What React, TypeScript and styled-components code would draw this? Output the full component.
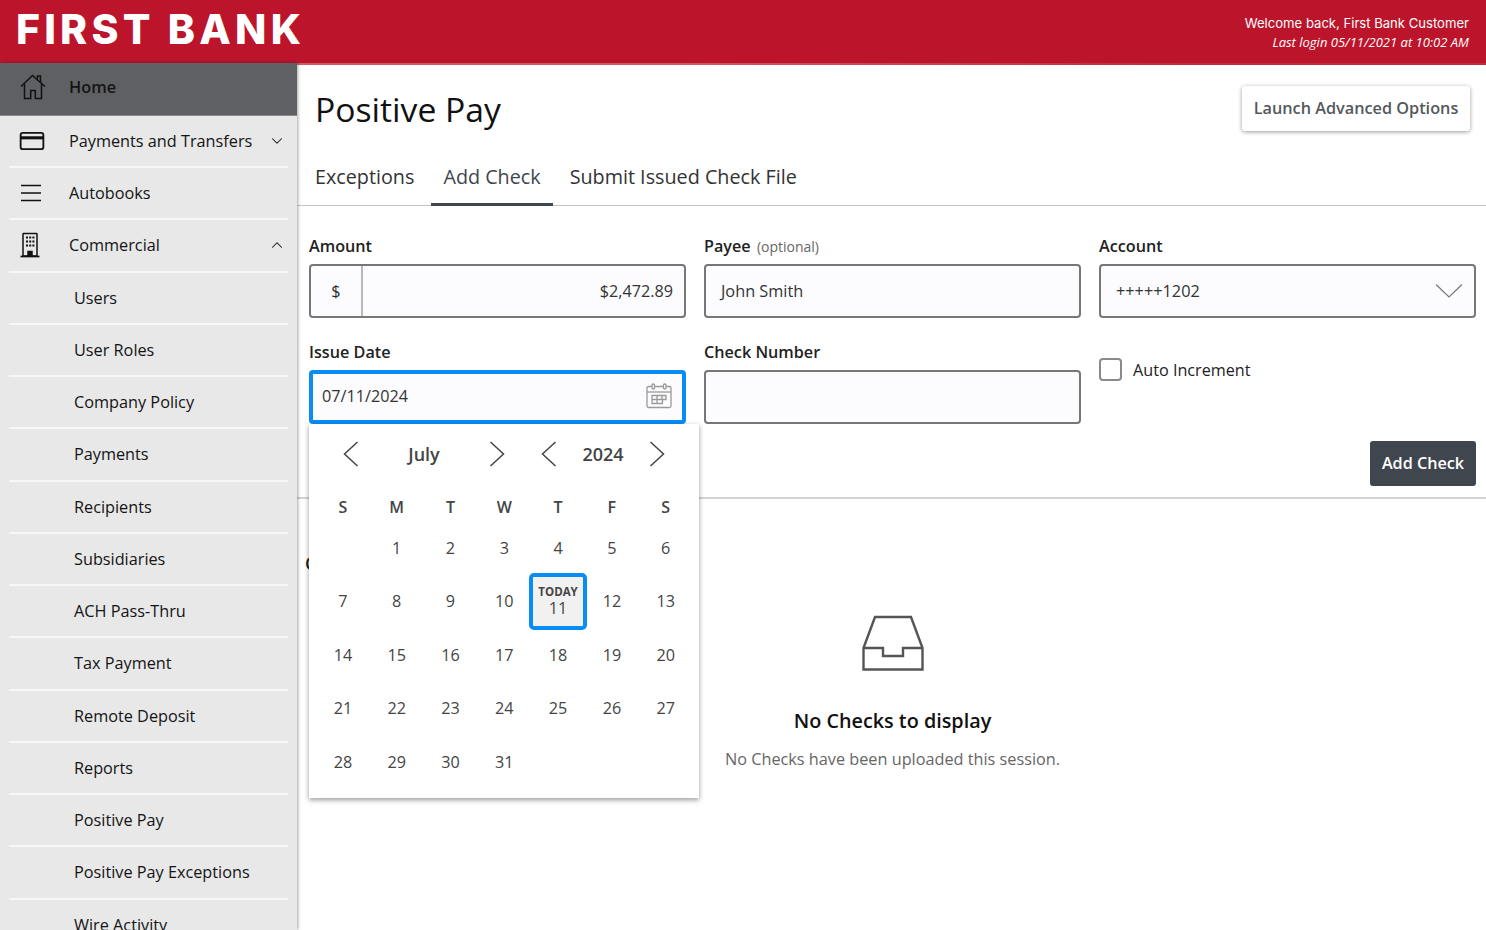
import React from 'react'
import styled, { createGlobalStyle } from 'styled-components'
import { ChevronDown, ChevronUp } from 'lucide-react'

const GlobalStyle = createGlobalStyle`
	html, body {
		margin: 0;
		padding: 0;
		height: 930px;
		overflow: hidden;
		background: #fff;
		font-family: "Open Sans", "Liberation Sans", sans-serif;
		color: #2b2b2b;
	}
	* { box-sizing: border-box; }
`

const HomeIcon = () => (
	<svg width="28" height="28" viewBox="0 0 28 28" fill="none" stroke="#111" strokeWidth="1.5">
		<path d="M2 13.5 13.5 2.5 26 13.5" />
		<path d="M5.5 11v14.5h6.2v-8h4.6v8h6.2V11" />
		<path d="M18.5 6V3h3v6" />
	</svg>
)

const CardIcon = () => (
	<svg width="26" height="20" viewBox="0 0 28 22" fill="none" stroke="#111" strokeWidth="2">
		<rect x="1.5" y="2" width="25" height="18" rx="2.5" />
		<path d="M1.5 7.5h25" strokeWidth="3.4" />
	</svg>
)

const MenuIcon = () => (
	<svg width="24" height="20" viewBox="0 0 24 20" fill="none" stroke="#111" strokeWidth="1.7">
		<path d="M2 2.5h20M2 10h20M2 17.5h20" />
	</svg>
)

const BuildingIcon = () => (
	<svg width="22" height="26" viewBox="0 0 22 26" fill="none" stroke="#111" strokeWidth="1.5">
		<rect x="4" y="1.5" width="14" height="22.5" rx="0.5" />
		<path d="M1.5 24.5h19" strokeWidth="1.7" />
		<path d="M9 24v-4.5h4V24" fill="#111" />
		<path d="M7 5.5h2M10.2 5.5h2M13.4 5.5h2M7 9.5h2M10.2 9.5h2M13.4 9.5h2M7 13.5h2M10.2 13.5h2M13.4 13.5h2" strokeWidth="2.2" />
	</svg>
)

const CalendarIcon = () => (
	<svg width="26" height="26" viewBox="0 0 26 26" fill="none" stroke="#9a9a9a" strokeWidth="1.3">
		<rect x="1" y="3.5" width="24" height="21" rx="1.5" />
		<path d="M1 9h24" />
		<rect x="6" y="1" width="2.5" height="5" rx="1.2" fill="#fff" />
		<rect x="17.5" y="1" width="2.5" height="5" rx="1.2" fill="#fff" />
		<path d="M6 12.5h14v4h-3.5v4H6zM6 16.5h10.5M11 12.5v8M16 12.5v4" />
	</svg>
)

const InboxIcon = () => (
	<svg width="62" height="56" viewBox="0 0 62 56" fill="none" stroke="#555" strokeWidth="2.4">
		<path d="M1.5 54.5V33L13 2h36l11.500 31v21.500z" />
		<path d="M1.500 33H21v8h20v-8h19.500" />
	</svg>
)

const LeftArrow = () => (
	<svg width="16" height="26" viewBox="0 0 16 26" fill="none" stroke="#444" strokeWidth="1.500">
		<path d="M14.500 1 1.500 13l13 12" />
	</svg>
)

const RightArrow = () => (
	<svg width="16" height="26" viewBox="0 0 16 26" fill="none" stroke="#444" strokeWidth="1.500">
		<path d="M1.500 1l13 12-13 12" />
	</svg>
)

const sideItems: { label: string; icon?: React.ReactNode; chevron?: 'up' | 'down'; active?: boolean }[] = [
	{ label: 'Home', icon: <HomeIcon />, active: true },
	{ label: 'Payments and Transfers', icon: <CardIcon />, chevron: 'down' },
	{ label: 'Autobooks', icon: <MenuIcon /> },
	{ label: 'Commercial', icon: <BuildingIcon />, chevron: 'up' },
	{ label: 'Users' },
	{ label: 'User Roles' },
	{ label: 'Company Policy' },
	{ label: 'Payments' },
	{ label: 'Recipients' },
	{ label: 'Subsidiaries' },
	{ label: 'ACH Pass-Thru' },
	{ label: 'Tax Payment' },
	{ label: 'Remote Deposit' },
	{ label: 'Reports' },
	{ label: 'Positive Pay' },
	{ label: 'Positive Pay Exceptions' },
	{ label: 'Wire Activity' },
]

const weekDays = ['S', 'M', 'T', 'W', 'T', 'F', 'S']
const days: (number | null)[] = [null, ...Array.from({ length: 31 }, (_, i) => i + 1)]

export default function App() {
	return (
		<Page>
			<GlobalStyle />
			<Header>
				<Logo>FIRST BANK</Logo>
				<Welcome>
					<div>Welcome back, First Bank Customer</div>
					<LastLogin>Last login 05/11/2021 at 10:02 AM</LastLogin>
				</Welcome>
			</Header>
			<Body>
				<Sidebar>
					{sideItems.map((item) => (
						<SideRow key={item.label} $active={item.active}>
							{item.icon ? <SideIcon>{item.icon}</SideIcon> : null}
							<SideLabel $sub={!item.icon}>{item.label}</SideLabel>
							{item.chevron === 'down' && <ChevronDown size={18} strokeWidth={1.4} color="#111" />}
							{item.chevron === 'up' && <ChevronUp size={18} strokeWidth={1.4} color="#111" />}
						</SideRow>
					))}
				</Sidebar>
				<Main>
					<TitleRow>
						<Title>Positive Pay</Title>
						<LaunchButton>Launch Advanced Options</LaunchButton>
					</TitleRow>
					<Tabs>
						<Tab>Exceptions</Tab>
						<Tab $active>Add Check</Tab>
						<Tab>Submit Issued Check File</Tab>
					</Tabs>
					<FormArea>
						<FormGrid>
							<Field>
								<FieldLabel>Amount</FieldLabel>
								<InputBox>
									<Prefix>$</Prefix>
									<AmountValue>$2,472.89</AmountValue>
								</InputBox>
							</Field>
							<Field>
								<FieldLabel>
									Payee <Optional>(optional)</Optional>
								</FieldLabel>
								<InputBox>
									<TextValue>John Smith</TextValue>
								</InputBox>
							</Field>
							<Field>
								<FieldLabel>Account</FieldLabel>
								<InputBox>
									<TextValue>+++++1202</TextValue>
									<SelectArrow width="28" height="16" viewBox="0 0 28 16" fill="none" stroke="#777" strokeWidth="1.200">
										<path d="M1 1.500 14 14 27 1.500" />
									</SelectArrow>
								</InputBox>
							</Field>
							<Field>
								<FieldLabel>Issue Date</FieldLabel>
								<DateBox>
									<DateValue>07/11/2024</DateValue>
									<CalendarIcon />
								</DateBox>
								<Popover>
									<PickerHead>
										<PickerArrow><LeftArrow /></PickerArrow>
										<MonthName>July</MonthName>
										<PickerArrow><RightArrow /></PickerArrow>
										<PickerArrow $gap><LeftArrow /></PickerArrow>
										<YearName>2024</YearName>
										<PickerArrow><RightArrow /></PickerArrow>
									</PickerHead>
									<WeekRow>
										{weekDays.map((d, i) => (
											<WeekDay key={i}>{d}</WeekDay>
										))}
									</WeekRow>
									<DayGrid>
										{days.map((d, i) =>
											d === 11 ? (
												<TodayCell key={i}>
													<TodayTag>TODAY</TodayTag>
													<TodayNum>11</TodayNum>
												</TodayCell>
											) : (
												<DayCell key={i}>{d}</DayCell>
											)
										)}
									</DayGrid>
								</Popover>
							</Field>
							<Field>
								<FieldLabel>Check Number</FieldLabel>
								<InputBox />
							</Field>
							<AutoField>
								<Checkbox />
								<AutoLabel>Auto Increment</AutoLabel>
							</AutoField>
						</FormGrid>
						<ActionRow>
							<AddButton>Add Check</AddButton>
						</ActionRow>
					</FormArea>
					<ListSection>
						<ListHeading>Checks</ListHeading>
						<EmptyState>
							<InboxIcon />
							<EmptyTitle>No Checks to display</EmptyTitle>
							<EmptyText>No Checks have been uploaded this session.</EmptyText>
						</EmptyState>
					</ListSection>
				</Main>
			</Body>
		</Page>
	)
}

const Page = styled.div`
	width: 1486px;
	height: 930px;
	display: flex;
	flex-direction: column;
	overflow: hidden;
`

const Header = styled.header`
	height: 65px;
	flex: none;
	background: #bc152b;
	border-bottom: 2px solid;
	border-image: linear-gradient(90deg, #d2586a 0, #d2586a 45%, #c4283c 80%) 1;
	display: flex;
	align-items: flex-start;
	justify-content: space-between;
	padding: 0 17px 0 16px;
`

const Logo = styled.div`
	font-family: Inter, "Open Sans", sans-serif;
	font-weight: 800;
	font-size: 41px;
	line-height: 58px;
	letter-spacing: 4.200px;
	color: #fff;
	white-space: nowrap;
`

const Welcome = styled.div`
	padding-top: 13px;
	text-align: right;
	color: #fff;
	font-family: Inter, "Open Sans", sans-serif;
	font-size: 13.100px;
	line-height: 20px;
`

const LastLogin = styled.div`
	font-family: "Open Sans", sans-serif;
	font-style: italic;
	font-size: 13px;
	line-height: 19px;
`

const Body = styled.div`
	flex: 1;
	display: flex;
	min-height: 0;
`

const Sidebar = styled.nav`
	width: 297px;
	flex: none;
	margin-top: -2px;
	background: #e8e8e8;
	box-shadow: 1px 0 3px rgba(0, 0, 0, 0.35);
	overflow: hidden;
	z-index: 1;
`

const SideRow = styled.div<{ $active?: boolean }>`
	height: ${(p) => (p.$active ? '52.750px' : '52.250px')};
	display: flex;
	align-items: center;
	margin: ${(p) => (p.$active ? '0' : '0 9px')};
	padding: ${(p) => (p.$active ? '0 18px 3px 19px' : '0 2px 0 10px')};
	background: ${(p) => (p.$active ? '#5f6064' : 'transparent')};
	border-bottom: ${(p) => (p.$active ? '1px solid #8a8a8a' : '2px solid #f7f7f7')};
	font-size: 16.250px;
	color: #141414;
	font-weight: ${(p) => (p.$active ? 600 : 400)};
`

const SideIcon = styled.span`
	width: 50px;
	flex: none;
	display: flex;
	align-items: center;
`

const SideLabel = styled.span<{ $sub?: boolean }>`
	flex: 1;
	padding-left: ${(p) => (p.$sub ? '55px' : '0')};
	white-space: nowrap;
`

const Main = styled.main`
	flex: 1;
	min-width: 0;
	display: flex;
	flex-direction: column;
`

const TitleRow = styled.div`
	height: 91px;
	flex: none;
	display: flex;
	justify-content: space-between;
	align-items: flex-start;
	padding: 19px 16px 0 18px;
`

const Title = styled.h1`
	margin: 0;
	font-weight: 400;
	font-size: 33.700px;
	line-height: 50px;
	color: #111;
`

const LaunchButton = styled.button`
	height: 45px;
	width: 228px;
	margin-top: 2px;
	background: #fff;
	border: none;
	border-radius: 3px;
	box-shadow: 0 1px 4px rgba(0, 0, 0, 0.4);
	font-family: inherit;
	font-weight: 600;
	font-size: 16.250px;
	color: #55585c;
	padding: 0 0 2px;
`

const Tabs = styled.div`
	height: 50px;
	flex: none;
	display: flex;
	padding-left: 6px;
	border-bottom: 1px solid #c4c4c4;
`

const Tab = styled.div<{ $active?: boolean }>`
	height: 50px;
	padding: 6px 12px 0;
	margin-right: 5px;
	font-size: 19.750px;
	line-height: 30px;
	color: ${(p) => (p.$active ? '#3e4650' : '#333')};
	border-bottom: 3px solid ${(p) => (p.$active ? '#3e4650' : 'transparent')};
`

const FormArea = styled.div`
	flex: none;
	height: 293px;
	padding: 29px 10px 0 12px;
	border-bottom: 2px solid #d4d4d4;
`

const FormGrid = styled.div`
	display: grid;
	grid-template-columns: repeat(3, 377px);
	column-gap: 18px;
	row-gap: 23px;
`

const Field = styled.div`
	position: relative;
`

const FieldLabel = styled.div`
	font-weight: 600;
	font-size: 16.200px;
	line-height: 22px;
	height: 29px;
	color: #222;
`

const Optional = styled.span`
	font-weight: 400;
	font-size: 14px;
	color: #666;
	margin-left: 2px;
`

const InputBox = styled.div`
	height: 54px;
	display: flex;
	align-items: center;
	background: #fcfcfe;
	border: 2px solid #777;
	border-radius: 4px;
`

const Prefix = styled.div`
	width: 52px;
	height: 100%;
	flex: none;
	display: flex;
	align-items: center;
	justify-content: center;
	border-right: 2px solid #b9b9b9;
	font-size: 16.200px;
`

const AmountValue = styled.div`
	flex: 1;
	text-align: right;
	padding-right: 11px;
	font-size: 16.200px;
	color: #333;
`

const TextValue = styled.div`
	flex: 1;
	padding-left: 15px;
	font-size: 16.300px;
	color: #333;
`

const SelectArrow = styled.svg`
	margin-right: 11px;
`

const DateBox = styled.div`
	height: 54px;
	display: flex;
	align-items: center;
	justify-content: space-between;
	padding: 0 10px 2px 9px;
	background: #fcfcfe;
	border: 4px solid #0a8cf5;
	border-radius: 4px;
`

const DateValue = styled.div`
	font-size: 16.200px;
	color: #333;
`

const Popover = styled.div`
	position: absolute;
	top: 83px;
	left: 0;
	width: 390px;
	height: 374px;
	padding: 0 7px;
	background: #fff;
	box-shadow: 0 2px 5px rgba(0, 0, 0, 0.4);
	z-index: 2;
`

const PickerHead = styled.div`
	height: 60px;
	display: flex;
	align-items: center;
	padding-left: 19px;
	font-size: 18px;
	font-weight: 600;
	color: #444;
`

const PickerArrow = styled.span<{ $gap?: boolean }>`
	width: 32px;
	height: 32px;
	margin-left: ${(p) => (p.$gap ? '20px' : '0')};
	display: flex;
	align-items: center;
	justify-content: center;
`

const MonthName = styled.span`
	width: 114px;
	text-align: center;
`

const YearName = styled.span`
	width: 76px;
	text-align: center;
`

const WeekRow = styled.div`
	display: grid;
	grid-template-columns: repeat(7, 53.800px);
	height: 37px;
	align-items: start;
`

const WeekDay = styled.div`
	text-align: center;
	font-size: 16px;
	font-weight: 600;
	line-height: 46px;
	height: 37px;
	color: #444;
`

const DayGrid = styled.div`
	display: grid;
	grid-template-columns: repeat(7, 53.800px);
	grid-auto-rows: 53.500px;
`

const DayCell = styled.div`
	display: flex;
	align-items: center;
	justify-content: center;
	font-size: 16.200px;
	color: #444;
`

const TodayCell = styled.div`
	margin: -2px;
	display: flex;
	flex-direction: column;
	align-items: center;
	justify-content: center;
	background: #f1f1f1;
	border: 4px solid #0a8cf5;
	border-radius: 5px;
	color: #444;
`

const TodayTag = styled.div`
	font-size: 11.500px;
	font-weight: 700;
	line-height: 15px;
`

const TodayNum = styled.div`
	font-size: 16.200px;
	line-height: 19px;
`

const AutoField = styled.div`
	display: flex;
	align-items: flex-start;
	gap: 11px;
	padding-top: 17px;
`

const Checkbox = styled.div`
	width: 23px;
	height: 23px;
	background: #fff;
	border: 2px solid #8a8a8a;
	border-radius: 4px;
`

const AutoLabel = styled.div`
	font-size: 16.200px;
	line-height: 24px;
	color: #222;
`

const ActionRow = styled.div`
	display: flex;
	justify-content: flex-end;
	margin-top: 17px;
`

const AddButton = styled.button`
	width: 106px;
	height: 45px;
	background: #3f464d;
	color: #fff;
	border: none;
	border-radius: 3px;
	font-family: inherit;
	font-weight: 600;
	font-size: 16.200px;
	padding: 0 0 1px;
`

const ListSection = styled.section`
	flex: 1;
	padding: 50px 0 0 8px;
`

const ListHeading = styled.div`
	font-size: 18px;
	font-weight: 600;
	line-height: 28px;
	color: #222;
`

const EmptyState = styled.div`
	display: flex;
	flex-direction: column;
	align-items: center;
	margin: 38px 0 0 -6px;
`

const EmptyTitle = styled.div`
	margin-top: 36px;
	font-weight: 600;
	font-size: 19.800px;
	line-height: 28px;
	color: #111;
`

const EmptyText = styled.div`
	margin-top: 12px;
	font-size: 16.250px;
	line-height: 24px;
	color: #666;
`
